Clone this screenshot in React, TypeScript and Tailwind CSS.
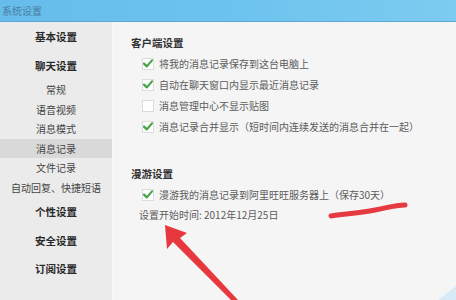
const font = { fontFamily: '"Noto Sans CJK SC", "Microsoft YaHei", sans-serif' };

const subItems = ["常规", "语音视频", "消息模式", "消息记录", "文件记录", "自动回复、快捷短语"];

const clientOptions = [
  { label: "将我的消息记录保存到这台电脑上", checked: true },
  { label: "自动在聊天窗口内显示最近消息记录", checked: true },
  { label: "消息管理中心不显示贴图", checked: false },
  { label: "消息记录合并显示（短时间内连续发送的消息合并在一起）", checked: true },
];

function CheckBox({ checked }: { checked: boolean }) {
  return (
    <span className="w-[12px] h-[12px] border border-[#dcdcdc] bg-white flex items-center justify-center shrink-0">
      {checked && (
        <svg width="10" height="9" viewBox="0 0 10 9">
          <path d="M1 4.6 L3.8 7.4 L9 1.4" fill="none" stroke="#45a447" strokeWidth="2.2" strokeLinecap="round" strokeLinejoin="round" />
        </svg>
      )}
    </span>
  );
}

function OptionRow({ label, checked }: { label: string; checked: boolean }) {
  return (
    <div className="h-[21px] flex items-center gap-[5px] ml-[11px]">
      <CheckBox checked={checked} />
      <span className="text-[10px] leading-none text-[#5c5c5c] whitespace-nowrap">{label}</span>
    </div>
  );
}

export default function App() {
  return (
    <div className="relative w-[456px] h-[300px] overflow-hidden bg-[#f5f5f5]" style={font}>
      <div className="h-[22px] bg-gradient-to-r from-[#66bdeb] via-[#6cc3ef] to-[#7dcbf0] border-b border-[#5aa8d8] flex items-center pl-[2px]">
        <span className="text-[10px] text-[#4a7ea6]">系统设置</span>
      </div>

      <div className="flex h-[278px]">
        <div className="w-[113px] bg-[#ebebeb] border-r border-[#f8f8f8] flex flex-col">
          <div className="h-[30px] flex items-center justify-center text-[10.5px] font-bold text-[#2a2a2a]">基本设置</div>
          <div className="h-[28px] flex items-center justify-center text-[10.5px] font-bold text-[#2a2a2a]">聊天设置</div>
          {subItems.map((item) => (
            <div
              key={item}
              className={
                item === "消息记录"
                  ? "h-[19.5px] flex items-center justify-center text-[10px] text-[#444] bg-[#d9d9d9]"
                  : "h-[19.5px] flex items-center justify-center text-[10px] text-[#444] whitespace-nowrap"
              }
            >
              {item}
            </div>
          ))}
          <div className="h-[30px] flex items-center justify-center text-[10.5px] font-bold text-[#2a2a2a]">个性设置</div>
          <div className="h-[28px] flex items-center justify-center text-[10.5px] font-bold text-[#2a2a2a]">安全设置</div>
          <div className="h-[28px] flex items-center justify-center text-[10.5px] font-bold text-[#2a2a2a]">订阅设置</div>
        </div>

        <div className="flex-1 pl-[18px] pt-[13px] flex flex-col">
          <div className="h-[16px] flex items-center text-[10.5px] font-bold text-[#333]">客户端设置</div>
          <div className="mt-[2px] flex flex-col">
            {clientOptions.map((opt) => (
              <OptionRow key={opt.label} label={opt.label} checked={opt.checked} />
            ))}
          </div>

          <div className="mt-[29px] h-[16px] flex items-center text-[10.5px] font-bold text-[#333]">漫游设置</div>
          <div className="mt-[2px]">
            <OptionRow label="漫游我的消息记录到阿里旺旺服务器上（保存30天）" checked={true} />
          </div>
          <div className="h-[18px] flex items-center ml-[8px] text-[10px] text-[#5c5c5c]">设置开始时间: 2012年12月25日</div>
        </div>
      </div>

      <svg className="absolute inset-0 pointer-events-none" width="456" height="300" viewBox="0 0 456 300">
        <path
          d="M331 216 C 345 214, 360 213, 375 210 S 396 205, 405 205"
          fill="none"
          stroke="#e3262e"
          strokeWidth="5"
          strokeLinecap="round"
          opacity="0.9"
        />
        <polygon points="165,225 187,233 180,238 238,300 231,300 173,242 167,249" fill="#e8383d" />
        <polygon points="438,300 456,286 456,300" fill="#cfe9f7" opacity="0.8" />
      </svg>
    </div>
  );
}
